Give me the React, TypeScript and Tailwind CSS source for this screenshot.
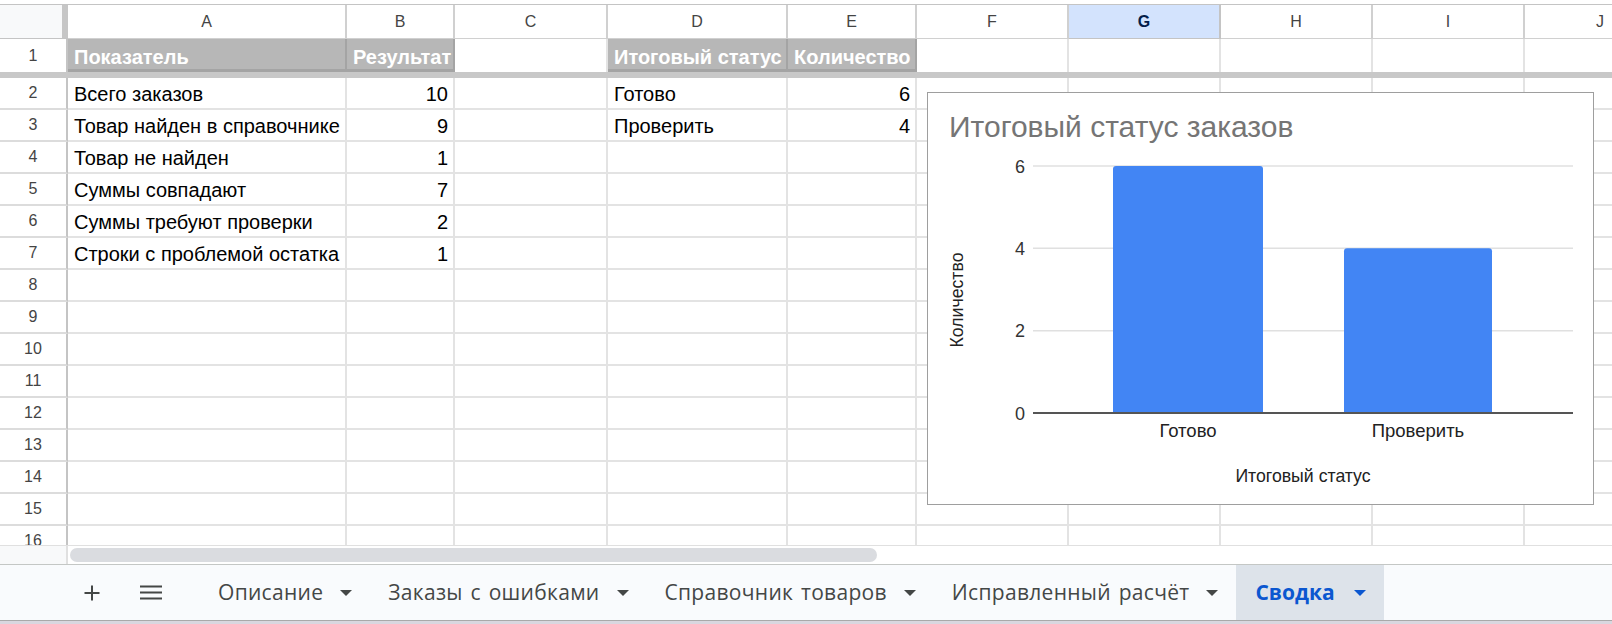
import React from "react";

const GRID =
  "grid grid-cols-[68px_279px_108px_153px_180px_129px_152px_152px_152px_152px_152px]";
const LETTERS = ["A", "B", "C", "D", "E", "F", "G", "H", "I", "J"];

type Cell = { t?: string; num?: boolean };

const DATA: Record<number, Cell[]> = {
  2: [{ t: "Всего заказов" }, { t: "10", num: true }, {}, { t: "Готово" }, { t: "6", num: true }],
  3: [{ t: "Товар найден в справочнике" }, { t: "9", num: true }, {}, { t: "Проверить" }, { t: "4", num: true }],
  4: [{ t: "Товар не найден" }, { t: "1", num: true }],
  5: [{ t: "Суммы совпадают" }, { t: "7", num: true }],
  6: [{ t: "Суммы требуют проверки" }, { t: "2", num: true }],
  7: [{ t: "Строки с проблемой остатка" }, { t: "1", num: true }],
};

const HEADER1: (string | null)[] = ["Показатель", "Результат", null, "Итоговый статус", "Количество", null, null, null, null, null];

function Caret({ color }: { color: string }) {
  return (
    <svg width="12" height="6" viewBox="0 0 12 6" className="shrink-0">
      <path d="M0 0 H12 L6 6 Z" fill={color} />
    </svg>
  );
}

function Tab({ label, active }: { label: string; active?: boolean }) {
  return (
    <div
      className={
        active
          ? "flex h-full items-center gap-[19px] bg-[#dde3ea] pl-[19px] pr-[18px]"
          : "flex h-full items-center gap-[17px] px-[18px]"
      }
    >
      <span
        className={
          active
            ? "whitespace-nowrap text-[21px] font-bold text-[#0b57d0]"
            : "whitespace-nowrap text-[21px] tracking-[0.3px] text-[#444746] [word-spacing:2px]"
        }
      >
        {label}
      </span>
      <Caret color={active ? "#0b57d0" : "#444746"} />
    </div>
  );
}

function Chart() {
  const grid = [
    { v: "6", y: 73 },
    { v: "4", y: 155.3 },
    { v: "2", y: 237.7 },
  ];
  return (
    <div className="absolute left-[927px] top-[92px] h-[413px] w-[667px] border border-[#9e9e9e] bg-white">
      <svg width="665" height="411" viewBox="0 0 665 411" className="block">
        <g fontFamily="'Liberation Sans', Arial, sans-serif">
          <text x="21" y="43.7" fontSize="30" fill="#757575">
            Итоговый статус заказов
          </text>
          {grid.map((g) => (
            <line key={g.v} x1="105" x2="645" y1={g.y} y2={g.y} stroke="#e0e0e0" strokeWidth="1.6" />
          ))}
          <path d="M185,320 V76 Q185,73 188,73 H332 Q335,73 335,76 V320 Z" fill="#4285f4" />
          <path d="M416,320 V158.3 Q416,155.3 419,155.3 H561 Q564,155.3 564,158.3 V320 Z" fill="#4285f4" />
          <line x1="105" x2="645" y1="320" y2="320" stroke="#555555" strokeWidth="2" />
          {[...grid, { v: "0", y: 320 }].map((g) => (
            <text key={"l" + g.v} x="97" y={g.y + 6.5} fontSize="18" fill="#333333" textAnchor="end">
              {g.v}
            </text>
          ))}
          <text x="260" y="344" fontSize="18.5" fill="#222222" textAnchor="middle">
            Готово
          </text>
          <text x="490" y="344" fontSize="18.5" fill="#222222" textAnchor="middle">
            Проверить
          </text>
          <text x="375" y="389" fontSize="17.7" fill="#222222" textAnchor="middle">
            Итоговый статус
          </text>
          <text transform="translate(35,207) rotate(-90)" fontSize="17.7" fill="#222222" textAnchor="middle">
            Количество
          </text>
        </g>
      </svg>
    </div>
  );
}

export default function App() {
  const rows = Array.from({ length: 15 }, (_, i) => i + 2);
  return (
    <div className="relative h-[624px] w-[1612px] overflow-hidden bg-white font-['Liberation_Sans',Arial,sans-serif]">
      {/* grid viewport */}
      <div className="h-[545px] overflow-hidden">
        <div className="h-[4px] bg-white" />
        {/* column headers */}
        <div className={`${GRID} h-[35px] border-t border-[#c4c4c4]`}>
          <div className="flex border-b border-[#c4c4c4] bg-[#f8f9fa]">
            <div className="w-[62px]" />
            <div className="w-[6px] bg-[#c6c6c6]" />
          </div>
          {LETTERS.map((l) => (
            <div
              key={l}
              className={
                l === "G"
                  ? "flex items-center justify-center border-r-2 border-b border-[#c4c4c4] bg-[#d3e3fd] text-[16px] font-bold text-[#041e49]"
                  : "flex items-center justify-center border-r-2 border-b border-[#d0d0d0] bg-white text-[16px] text-[#444444]"
              }
            >
              {l}
            </div>
          ))}
        </div>
        {/* row 1 */}
        <div className={`${GRID} h-[33px]`}>
          <div className="flex items-center justify-center border-r-2 border-[#c4c4c4] text-[16px] text-[#444444]">1</div>
          {HEADER1.map((h, i) =>
            h ? (
              <div
                key={i}
                className="flex items-end overflow-visible whitespace-nowrap border-r-2 border-b-[3px] border-[#a4a4a4] bg-[#b7b7b7] pl-[6px] text-[20px] font-bold leading-[23px] text-white"
              >
                {h}
              </div>
            ) : (
              <div key={i} className="border-r-2 border-[#e3e3e3]" />
            )
          )}
        </div>
        <div className="h-[6px] bg-[#c8c8c8]" />
        {rows.map((r) => {
          const cells = DATA[r] || [];
          return (
            <div key={r} className={`${GRID} h-[32px]`}>
              <div className="flex items-center justify-center border-r-2 border-b-2 border-r-[#c4c4c4] border-b-[#dcdcdc] text-[16px] text-[#444444]">
                {r}
              </div>
              {LETTERS.map((l, i) => {
                const c = cells[i];
                return (
                  <div
                    key={l}
                    className={
                      c && c.num
                        ? "flex items-end justify-end whitespace-nowrap border-r-2 border-b-2 border-[#e3e3e3] pb-[2px] pr-[5px] text-[20px] leading-[23px] text-black"
                        : "flex items-end whitespace-nowrap border-r-2 border-b-2 border-[#e3e3e3] pb-[2px] pl-[6px] text-[20px] leading-[23px] text-black"
                    }
                  >
                    {c && c.t ? c.t : null}
                  </div>
                );
              })}
            </div>
          );
        })}
      </div>

      {/* horizontal scrollbar */}
      <div className="flex h-[19px] border-t border-[#e0e0e0] bg-white">
        <div className="w-[68px] border-r-2 border-[#e0e0e0] bg-[#f8f9fa]" />
        <div className="flex items-center pl-[2px]">
          <div className="h-[14px] w-[807px] rounded-full bg-[#dadce0]" />
        </div>
      </div>

      {/* sheet tabs */}
      <div className="flex h-[56px] items-center border-t border-[#c4c7c5] bg-[#f9fbfd] pl-[72px] font-['Open_Sans',sans-serif]">
        <div className="flex h-full w-[40px] items-center justify-center">
          <svg width="16" height="16" viewBox="0 0 16 16">
            <path d="M8 0.5 V15.5 M0.5 8 H15.5" stroke="#444746" strokeWidth="2" />
          </svg>
        </div>
        <div className="ml-[19px] flex h-full w-[40px] items-center justify-center">
          <svg width="22" height="15" viewBox="0 0 22 15">
            <path d="M0 1.5 H22 M0 7.5 H22 M0 13.5 H22" stroke="#444746" strokeWidth="2" />
          </svg>
        </div>
        <div className="ml-[29px] flex h-full items-center">
          <Tab label="Описание" />
          <Tab label="Заказы с ошибками" />
          <Tab label="Справочник товаров" />
          <Tab label="Исправленный расчёт" />
          <Tab label="Сводка" active />
        </div>
      </div>
      <div className="h-[4px] border-t border-[#a9a9a9] bg-[#d9d7df]" />

      <Chart />
    </div>
  );
}
